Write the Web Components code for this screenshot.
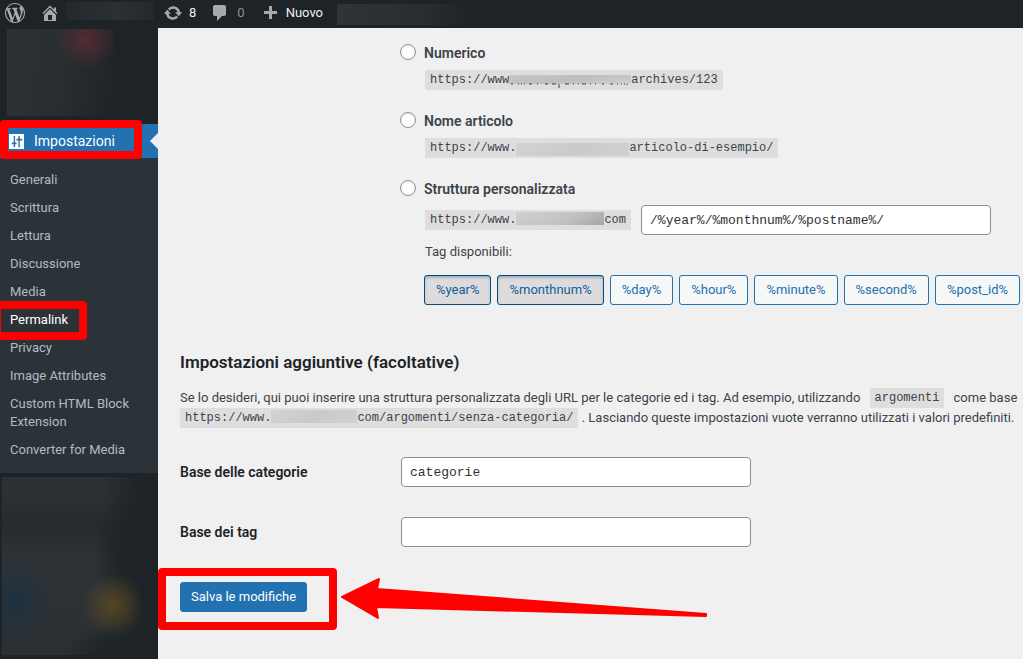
<!DOCTYPE html>
<html lang="it">
<head>
<meta charset="utf-8">
<title>Impostazioni Permalink</title>
<style>
html, body { height: 100%; }
body { margin: 0; background: #f0f0f0; overflow: hidden; font-family: Roboto, "Open Sans", sans-serif; font-size: 13px; line-height: 20px; color: #3c434a; }
</style>
</head>
<body>
<admin-page></admin-page>
<script>
const define = (name, html, setup) => {
  const template = document.createElement('template');
  template.innerHTML = html;
  customElements.define(name, class extends HTMLElement {
    connectedCallback() {
      if (this.shadowRoot) return;
      this.attachShadow({ mode: 'open' }).append(template.content.cloneNode(true));
      if (setup) setup(this, this.shadowRoot);
    }
  });
};

/* Hides private text behind a soft patch. */
define('private-patch', `
<style>
:host { display: block; background: var(--patch, #2a2f33); }
</style>`);

/* Red frame that highlights its positioned parent. */
define('red-frame', `
<style>
:host { position: absolute; box-sizing: border-box; border: 8px solid #f00; border-radius: 4px; pointer-events: none; z-index: 2; }
</style>`);

define('admin-bar', `
<style>
:host { display: block; background: #1d2327; color: #f0f0f1; }
nav { display: flex; align-items: center; height: 28px; padding-left: 5px; }
a { display: flex; align-items: center; color: inherit; text-decoration: none; height: 28px; padding-bottom: 3px; box-sizing: border-box; }
svg { fill: #a7aaad; display: block; }
.home { margin-left: 15px; }
.site { width: 88px; height: 18px; margin: 0 9px 6px 6px; --patch: linear-gradient(90deg, #24292d, #2b3034 60%, #24292d); }
.updates { gap: 6px; }
.comments { gap: 7px; margin-left: 14px; color: #8c8f94; }
.new { gap: 9px; margin-left: 19px; }
.extra { width: 130px; height: 21px; margin: 0 0 0 14px; --patch: linear-gradient(90deg, #2f3438, #282d31 70%, #1d2327); }
</style>
<nav aria-label="Barra degli strumenti">
  <a href="#" aria-label="WordPress"><svg width="20" height="20" viewBox="0 0 20 20"><path d="M20 10c0-5.51-4.49-10-10-10C4.48 0 0 4.49 0 10c0 5.52 4.48 10 10 10 5.51 0 10-4.48 10-10zM7.78 15.37L4.37 6.22c.55-.02 1.17-.08 1.17-.08.5-.06.44-1.13-.06-1.11 0 0-1.45.11-2.37.11-.18 0-.37 0-.58-.01C4.12 2.69 6.87 1.11 10 1.11c2.33 0 4.45.87 6.05 2.34-.68-.11-1.65.39-1.65 1.58 0 .74.45 1.36.9 2.1.35.61.55 1.36.55 2.46 0 1.49-1.4 5-1.4 5l-3.03-8.37c.54-.02.82-.17.82-.17.5-.05.44-1.25-.06-1.22 0 0-1.44.12-2.38.12-.87 0-2.33-.12-2.33-.12-.5-.03-.56 1.2-.06 1.22l.92.08 1.26 3.41zM17.41 10c.24-.64.74-1.87.43-4.25.7 1.29 1.05 2.71 1.05 4.25 0 3.29-1.73 6.24-4.4 7.78.97-2.59 1.94-5.2 2.92-7.78zM6.1 18.09C3.12 16.65 1.11 13.53 1.11 10c0-1.3.23-2.48.72-3.59C3.25 10.3 4.67 14.2 6.1 18.09zm4.03-6.63l2.58 6.98c-.86.29-1.76.45-2.71.45-.79 0-1.57-.11-2.29-.33.81-2.38 1.62-4.74 2.42-7.1z"/></svg></a>
  <a href="#" class="home" aria-label="Visita il sito"><svg width="20" height="20" viewBox="0 0 20 20"><path d="M16 8.5l1.53 1.53-1.06 1.06L10 4.6l-6.47 6.49-1.06-1.06L10 2.5l4 4v-2h2v4zm-6-2.46l6 5.99V18H4v-5.97zM12 17v-5H8v5h4z"/></svg></a>
  <private-patch class="site"></private-patch>
  <a href="#" class="updates"><svg width="20" height="20" viewBox="0 0 20 20"><path d="M10.2 3.28c3.53 0 6.43 2.61 6.92 6h2.08l-3.5 4-3.5-4h2.32c-.45-1.97-2.21-3.45-4.32-3.45-1.45 0-2.73.71-3.54 1.78L4.95 5.66C6.23 4.2 8.11 3.28 10.2 3.28zm-.4 13.44c-3.52 0-6.43-2.61-6.92-6H.8l3.5-4c1.17 1.33 2.33 2.67 3.5 4H5.48c.45 1.97 2.21 3.45 4.32 3.45 1.45 0 2.73-.71 3.54-1.78l1.71 1.95c-1.28 1.46-3.15 2.38-5.25 2.38z"/></svg><span>8</span></a>
  <a href="#" class="comments"><svg width="20" height="20" viewBox="0 0 20 20"><path d="M5 2h9c1.1 0 2 .9 2 2v7c0 1.1-.9 2-2 2h-2l-5 5v-5H5c-1.1 0-2-.9-2-2V4c0-1.1.9-2 2-2z"/></svg><span>0</span></a>
  <a href="#" class="new"><svg width="13" height="13" viewBox="0 0 13 13"><path d="M5 0h3v5h5v3H8v5H5V8H0V5h5z"/></svg><span>Nuovo</span></a>
  <private-patch class="extra"></private-patch>
</nav>`);

define('side-menu', `
<style>
:host { display: block; background: #1d2327; }
.top { height: 87px; margin: 1px 44px 8px 7px;
  --patch: radial-gradient(circle 30px at 79px 11px, #542c30 0, #542c3000 100%), linear-gradient(100deg, #2c3135 0, #292e32 50%, #1d2327 100%); }
.current { position: relative; display: flex; align-items: center; gap: 10px; height: 34px; padding-left: 9px; background: #2271b1; color: #fff; font-size: 14px; text-decoration: none; }
.current::after { content: ""; position: absolute; right: 0; top: 9px; border: 8px solid transparent; border-right-color: #f0f0f0; border-left: 0; }
.current svg { fill: #fff; }
.current red-frame { inset: -4px 16px -1px 0; }
ul { list-style: none; margin: 0; padding: 8px 0 9px; background: #2c3338; }
li { position: relative; }
li a { display: block; padding: 5px 20px 5px 10px; line-height: 18px; color: #b5babf; text-decoration: none; }
li a[aria-current] { color: #fff; }
li red-frame { inset: -5px 71px -6px -7px; }
.bottom { height: 178px; margin: 4px 17px 4px 2px;
  --patch: radial-gradient(circle 32px at 111px 128px, #554623 0, #55462300 100%), radial-gradient(circle 38px at 12px 126px, #1d323f 0, #1d323f00 100%), radial-gradient(50px 70px at 139px 80px, #1d2327 30%, #1d232700 100%), radial-gradient(60px 36px at 120px 178px, #1d2327 30%, #1d232700 100%), linear-gradient(90deg, #1d232700 70%, #1d2327 100%), linear-gradient(#2c3135 10%, #262b2f 28%, #2e3337 45%, #2b3034); }
</style>
<private-patch class="top"></private-patch>
<a href="#" class="current"><svg width="15" height="15" viewBox="2 2 16 16" aria-hidden="true"><path d="M18 18V2H2v16zM7 4h1.500v7H10v2H8.500v3H7v-3H5v-2h2zM12 4h1.500v3H16v2h-2.500v7H12V9h-2V7h2z"/></svg><span>Impostazioni</span><red-frame></red-frame></a>
<ul>
  <li><a href="#">Generali</a></li>
  <li><a href="#">Scrittura</a></li>
  <li><a href="#">Lettura</a></li>
  <li><a href="#">Discussione</a></li>
  <li><a href="#">Media</a></li>
  <li><a href="#" aria-current="page">Permalink</a><red-frame></red-frame></li>
  <li><a href="#">Privacy</a></li>
  <li><a href="#">Image Attributes</a></li>
  <li><a href="#">Custom HTML Block Extension</a></li>
  <li><a href="#">Converter for Media</a></li>
</ul>
<private-patch class="bottom"></private-patch>`);

/* URL sample; a hidden-name inside it covers the site's name. */
define('code-sample', `
<style>
:host { display: inline-block; vertical-align: top; }
code { display: flex; height: 20px; padding: 0 5px; background: #dedede; font: 12px/20px "Liberation Mono", monospace; white-space: nowrap; }
</style>
<code><slot></slot></code>`);

define('hidden-name', `
<style>
:host { display: block; height: 13px; background: linear-gradient(150deg, #d2d3d4, #c9cacc 50%, #d0d1d2); }
:host([tone=dark]) { background: linear-gradient(150deg, #cfd0d1, #bfc1c2 60%, #a3a6a8); }
:host([tone=thin]) { height: 9px; margin-top: 5px; background: linear-gradient(170deg, #c4c6c8, #bcbec0 50%, #cfd0d1); }
svg { display: none; }
:host([tone=thin]) svg { display: block; padding-top: 8px; }
</style>
<svg width="122" height="5" aria-hidden="true"><path d="M2 1h2M9 1h1M12 1h1M15 1h1M20 1h3M28 1h1M36 1h3M43 1h4M50 1v4M56 1h4M64 1h1M69 1h1M73 1h4M81 1h1M86 1h1M93 1h2M101 1h3M108 1h1M112 1h1M115 1h1M118 1v1" stroke="#3c434a" stroke-width="1" fill="none"/></svg>`);

define('structure-option', `
<style>
:host { display: grid; grid-template-columns: 17px 1fr; column-gap: 7px; }
input { appearance: none; box-sizing: border-box; width: 16px; height: 16px; margin: 1px 0 0; border: 1px solid #8c8f94; border-radius: 50%; background: #fff; box-shadow: inset 0 1px 2px #0000001a; }
label { font-size: 14px; font-weight: 600; line-height: 20px; }
.body { grid-column: 2; padding: 7px 0 0 1px; }
</style>
<input type="radio" name="structure" id="choice"><label for="choice"></label>
<div class="body"><slot></slot></div>`, (host, root) => { root.querySelector('label').textContent = host.getAttribute('label'); });

define('text-field', `
<style>
:host { display: flex; align-items: center; }
label { width: 221px; font-size: 14px; font-weight: 600; color: #1d2327; }
label:empty { display: none; }
input { box-sizing: border-box; width: 350px; height: 30px; padding: 0 8px; border: 1px solid #8c8f94; border-radius: 4px; background: #fff; color: #2c3338; font: 13px "Liberation Mono", monospace; }
</style>
<label for="field"></label><input type="text" id="field">`, (host, root) => {
  const input = root.querySelector('input');
  root.querySelector('label').textContent = host.getAttribute('label') || '';
  input.value = host.getAttribute('value') || '';
  if (host.hasAttribute('hint')) input.setAttribute('aria-label', host.getAttribute('hint'));
});

define('wp-button', `
<style>
:host { display: block; }
button { display: block; box-sizing: border-box; height: 30px; padding: 0 11px; border: 1px solid #2271b1; border-radius: 3px; background: #f6f7f7; color: #2271b1; font: inherit; line-height: 28px; white-space: nowrap; }
:host([active]) button { border-color: #0a4b78; background: #dcdcde; color: #135e96; box-shadow: inset 0 2px 5px -3px #0a4b78; }
:host([primary]) button { padding: 0 10px; background: #2271b1; color: #fff; }
</style>
<button type="button"><slot></slot></button>`);

define('permalink-settings', `
<style>
:host { display: block; padding: 15px 0 0 22px; white-space: nowrap; overflow: hidden; }
.options { display: grid; row-gap: 21px; padding-left: 220px; }
.custom { display: flex; align-items: center; gap: 10px; margin-top: -1px; }
.custom code-sample { margin-top: -1px; }
.hint { margin: 7px 0 13px; }
.tags { display: flex; gap: 6px; margin-left: -1px; }
h2 { margin: 47px 0 16px; font-size: 17px; line-height: 20px; font-weight: 600; color: #1d2327; }
p { margin: 0; }
p .word { margin: 0 6px; }
.fields { display: grid; row-gap: 30px; margin-top: 29px; }
.submit { position: relative; display: flex; margin-top: 35px; }
.submit red-frame { top: -14px; left: -22px; width: 179px; height: 62px; }
.arrow { position: absolute; left: 160px; top: -6px; fill: #f00; stroke: #f00; stroke-width: 2; stroke-linejoin: round; }
</style>
<div class="options">
  <structure-option label="Numerico"><code-sample>https://www<hidden-name tone="thin" style="width:122px"></hidden-name>archives/123</code-sample></structure-option>
  <structure-option label="Nome articolo"><code-sample>https://www.<hidden-name style="width:113px;margin-top:5px"></hidden-name>articolo-di-esempio/</code-sample></structure-option>
  <structure-option label="Struttura personalizzata">
    <div class="custom"><code-sample>https://www.<hidden-name tone="dark" style="width:88px;margin-top:2px"></hidden-name>com</code-sample><text-field hint="Struttura personalizzata" value="/%year%/%monthnum%/%postname%/"></text-field></div>
    <div class="hint">Tag disponibili:</div>
    <div class="tags"><wp-button active>%year%</wp-button><wp-button active>%monthnum%</wp-button><wp-button>%day%</wp-button><wp-button>%hour%</wp-button><wp-button>%minute%</wp-button><wp-button>%second%</wp-button><wp-button>%post_id%</wp-button></div>
  </structure-option>
</div>
<h2>Impostazioni aggiuntive (facoltative)</h2>
<p>Se lo desideri, qui puoi inserire una struttura personalizzata degli URL per le categorie ed i tag. Ad esempio, utilizzando <code-sample class="word">argomenti</code-sample> come base<br><code-sample>https://www.<hidden-name style="width:86px;margin-top:2px"></hidden-name>com/argomenti/senza-categoria/</code-sample> . Lasciando queste impostazioni vuote verranno utilizzati i valori predefiniti.</p>
<div class="fields">
  <text-field label="Base delle categorie" value="categorie"></text-field>
  <text-field label="Base dei tag"></text-field>
</div>
<div class="submit">
  <wp-button primary>Salva le modifiche</wp-button>
  <red-frame></red-frame>
  <svg class="arrow" width="370" height="46" viewBox="340 576 370 46" aria-hidden="true"><path d="M342 597L379 579L377 589L706 614V616L376 607L378 618Z"/></svg>
</div>`);

define('admin-page', `
<style>
:host { display: flex; flex-direction: column; min-height: 100vh; }
.columns { display: grid; grid-template-columns: 158px minmax(0, 1fr); flex: 1; }
</style>
<admin-bar></admin-bar>
<div class="columns"><side-menu></side-menu><permalink-settings></permalink-settings></div>`);
</script>
</body>
</html>
